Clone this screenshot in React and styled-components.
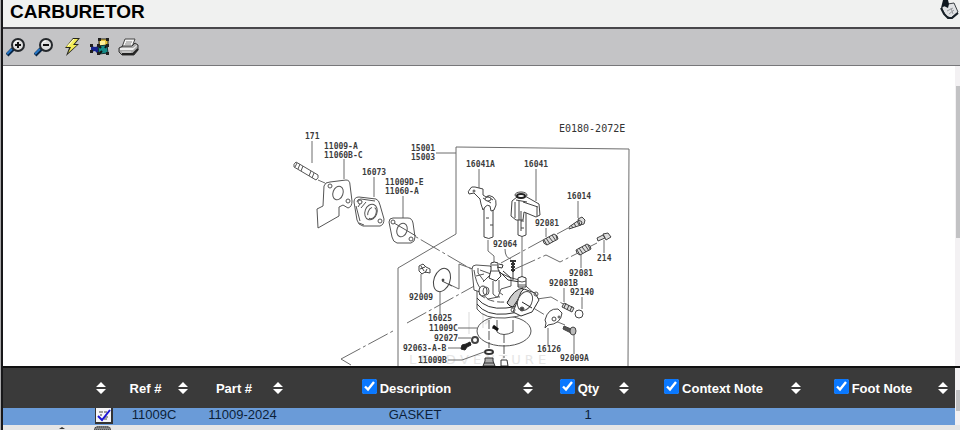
import React, { useState } from 'react';
import styled, { createGlobalStyle } from 'styled-components';

const tools = [
  { name: 'Zoom in', icon: <ZoomIcon plus /> },
  { name: 'Zoom out', icon: <ZoomIcon /> },
  { name: 'Hotspots', icon: <FlashIcon /> },
  { name: 'Fit assembly', icon: <PartsIcon /> },
  { name: 'Print', icon: <PrinterIcon /> },
];

const columns = [
  { id: 'ref', label: 'Ref #', width: 82 },
  { id: 'part', label: 'Part #', width: 95 },
  { id: 'description', label: 'Description', width: 250, toggle: true },
  { id: 'qty', label: 'Qty', width: 96, toggle: true },
  { id: 'context', label: 'Context Note', width: 172, toggle: true },
  { id: 'foot', label: 'Foot Note', width: 147, toggle: true },
];

const rows = [
  { ref: '11009C', part: '11009-2024', description: 'GASKET', qty: '1', context: '', foot: '' },
];

// [x, baseline, text]
const labels = [
  [306, 139, '171'],
  [325, 149, '11009-A'],
  [325, 158, '11060B-C'],
  [363, 175, '16073'],
  [386, 185, '11009D-E'],
  [386, 194, '11060-A'],
  [412, 151, '15001'],
  [412, 160, '15003'],
  [467, 167, '16041A'],
  [525, 167, '16041'],
  [568, 199, '16014'],
  [536, 226, '92081'],
  [494, 247, '92064'],
  [598, 261, '214'],
  [570, 276, '92081'],
  [550, 286, '92081B'],
  [571, 295, '92140'],
  [410, 300, '92009'],
  [429, 321, '16025'],
  [430, 331, '11009C'],
  [435, 341, '92027'],
  [404, 351, '92063-A-B'],
  [419, 363, '11009B'],
  [538, 352, '16126'],
  [561, 361, '92009A'],
];

function App() {
  const [shown, setShown] = useState({ description: true, qty: true, context: true, foot: true });

  const toggle = (id) => setShown({ ...shown, [id]: !shown[id] });

  return (
    <>
      <GlobalStyle />
      <Page>
        <Header>
          <h1>CARBURETOR</h1>
          <HandButton aria-label="Add to list"><HandIcon /></HandButton>
        </Header>
        <Toolbar>
          {tools.map((tool) => (
            <ToolButton key={tool.name} aria-label={tool.name}>{tool.icon}</ToolButton>
          ))}
        </Toolbar>
        <DiagramPane>
          <Canvas><Diagram /></Canvas>
          <Track><Thumb $top={20} $height={152} /></Track>
        </DiagramPane>
        <PartsPane>
          <PartsTable>
            <colgroup>
              <col width={110} />
              {columns.map((col) => <col key={col.id} width={col.width} />)}
            </colgroup>
            <thead>
              <tr>
                <th>
                  <HeadCell><SortButton aria-label="Sort by selection"><SortIcon /></SortButton></HeadCell>
                </th>
                {columns.map((col) => (
                  <th key={col.id}>
                    <HeadCell>
                      <HeadLabel>
                        {col.toggle && (
                          <input type="checkbox" checked={shown[col.id]} onChange={() => toggle(col.id)} />
                        )}
                        <span>{col.label}</span>
                      </HeadLabel>
                      <SortButton aria-label={`Sort by ${col.label}`}><SortIcon /></SortButton>
                    </HeadCell>
                  </th>
                ))}
              </tr>
            </thead>
            <tbody>
              {rows.map((row) => (
                <PartRow key={row.ref}>
                  <td><IconCell><NoteIcon /></IconCell></td>
                  {columns.map((col) => <td key={col.id}>{row[col.id]}</td>)}
                </PartRow>
              ))}
            </tbody>
          </PartsTable>
          <Track><Thumb $top={22} $height={21} /></Track>
        </PartsPane>
        <NextRow><NextRowIcon /></NextRow>
      </Page>
    </>
  )
}

function ZoomIcon({ plus }) {
  return (
    <svg width="20" height="20" viewBox="0 0 20 20">
      <path d="M1 18L7 12" stroke="#082444" strokeWidth="4" />
      <path d="M1 17L6 12" stroke="#2475c4" strokeWidth="2" />
      <circle cx="12" cy="8" r="6" fill="#dedede" stroke="#25282c" strokeWidth="2" />
      <path d="M8 7a4 4 0 0 1 4-3" stroke="#fff" fill="none" />
      <path d={plus ? 'M9 8h6M12 5v6' : 'M9 8h6'} stroke="#111" strokeWidth="2" />
    </svg>
  )
}

function FlashIcon() {
  return (
    <svg width="20" height="20" viewBox="0 0 20 20">
      <path d="M11 1h7l-5 6h4L4 19l3-8H3z" fill="#25251c" />
      <path d="M11 2h5l-5 6h4L6 16l3-6H4z" fill="#f4ed58" />
      <path d="M12 2L6 9" stroke="#fffde0" />
    </svg>
  )
}

function PartsIcon() {
  return (
    <svg width="20" height="20" viewBox="0 0 20 20">
      <path d="M9 2h9v8H9z" fill="#e6c33f" stroke="#26261c" strokeWidth="1" />
      <path d="M10 4h5v4h-5z" fill="#fff29a" />
      <path d="M1 9l4 1 4-1 2 4-3 4-3-3-4 1z" fill="#16228e" />
      <path d="M8 9l9-1 1 8-9 1z" fill="#168b88" stroke="#173536" />
      <path d="M8 8l3 3M17 8l-2 3M9 17l3-3" stroke="#111" strokeWidth="2" />
      <path d="M8 1h3v3H8zM16 1h3v3h-3zM0 7h3v3H0zM16 7h3v3h-3zM0 13h3v3H0zM7 15h3v3H7zM16 15h3v3h-3zM7 7h3v3H7z" fill="#202020" />
    </svg>
  )
}

function PrinterIcon() {
  return (
    <svg width="21" height="20" viewBox="0 0 21 20">
      <path d="M7 2h10l-3 8H4z" fill="#f6f6f6" stroke="#444" />
      <path d="M8 5h6M7 7h6" stroke="#888" />
      <path d="M1 11l4-2h9l3-3 3 2v5l-4 5H4l-3-3z" fill="#aaa" stroke="#333" />
      <path d="M2 11h13l4-3v1l-4 4H2z" fill="#eee" />
      <path d="M4 17h11l5-5" stroke="#222" strokeWidth="2" fill="none" />
      <path d="M4 15h9" stroke="#ddd" />
    </svg>
  )
}

function HandIcon() {
  return (
    <svg width="20" height="19" viewBox="0 0 20 19">
      <path d="M2 7l6-3 6-1 4 9-7 6-5-2-4-7z" fill="#e0e2e4" stroke="#3a3f44" strokeWidth="1" />
      <path d="M3 0h5l1 4-1 4-2-1-2-1-3 2 1-4z" fill="#101820" />
      <path d="M1 8l3 6 4 4h4l6-5" fill="none" stroke="#172027" strokeWidth="2" />
      <path d="M7 11l6-3M9 14l5-4M11 8l2 6" stroke="#9a9ca0" />
    </svg>
  )
}

function SortIcon() {
  return (
    <svg width="10" height="12" viewBox="0 0 10 12">
      <path d="M5 0l5 5H0zM5 12l5-5H0z" fill="#fff" />
    </svg>
  )
}

function NoteIcon() {
  return (
    <svg width="18" height="16" viewBox="0 0 18 16">
      <path d="M0 0h18v16H0z" fill="#333" />
      <path d="M1 0h15v14H1z" fill="#f5f5f7" />
      <path d="M4 4h4M9 4h3M5 7h2M10 9h3M9 11h3" stroke="#444" strokeWidth="1" />
      <path d="M3 8l4 4 8-10" stroke="#1b14d6" strokeWidth="2" fill="none" />
    </svg>
  )
}

function NextRowIcon() {
  return (
    <svg width="54" height="5" viewBox="0 0 54 5">
      <path d="M1 4l3-2 3 2z" fill="#333" />
      <path d="M36 5V3l3-2h11l3 2v2z" fill="#888" />
      <path d="M37 3l2-1h11l2 1M36 5h17" stroke="#222" strokeDasharray="1 1" fill="none" />
    </svg>
  )
}

function Diagram() {
  return (
    <svg width="380" height="300" viewBox="290 66 380 300" role="img" aria-label="Carburetor exploded view">
      <Watermark x="410" y="364">L E A D V E N T U R E</Watermark>
      <g fill="none" stroke="#ececec" strokeWidth="2">
        <path d="M470 312v22M484 304v24M500 310l-14 14" />
      </g>

      {/* assembly frame and leaders */}
      <g fill="none" stroke="#6c6c6c" strokeWidth="1">
        <path d="M437 153h20M457 234V147l173 2-1 217M457 234l-58 34v98" />
        <path d="M313 141v22M345 159v20M375 177v20M404 196v22M480 169v20M537 169v32M579 201v17M547 228v9M605 240v13M582 253v15M565 288v14M583 297v12" />
        <path d="M422 274v19M441 292v22M549 328v17M575 335v19M506 249q0 9 6 10" />
        <path d="M459 328h19M459 338h13M449 348h13M449 360h14l22-8" />
        <path d="M319 180l7 3M443 281l17 8v-25l14 5M352 365l-10-6" />
        <path d="M489 240v11l6 5v7M523 237v42" />
      </g>
      <g fill="none" stroke="#6c6c6c" strokeWidth="1" strokeDasharray="22 3 3 3">
        <path d="M395 224l77 45M342 359l52-28M408 323l80-44" />
        <path d="M502 263l42-23M558 234l11-6M516 269l31-14 14 7 18-9M590 247l8-4M538 299l14-2 14 8M526 303l20 12M554 320l12 5" />
      </g>

      {/* stud 171 */}
      <g fill="#fff" stroke="#555" strokeWidth="1">
        <path d="M297 162l22 13q1 3-2 5l-22-13q-1-3 2-5z" />
        <path d="M298 163l-2 4M301 164l-2 5M304 166l-2 5M312 171l-2 5M315 173l-2 5" />
      </g>

      {/* gaskets and insulator */}
      <g fill="#fff" stroke="#555" strokeWidth="1">
        <path d="M325 186q1-4 6-4l16-2q4 0 4 5l2 16q0 6-4 7l-5-3-4 2v9l-21 12-1-19 6-3z" />
        <ellipse cx="339" cy="193" rx="5" ry="7" transform="rotate(20 339 193)" />
        <circle cx="331" cy="186" r="2" />
        <circle cx="349" cy="201" r="2" />
        <path d="M355 202q0-5 5-5l17 2q3 1 4 6l4 14q0 6-4 7l-17 0q-5-1-6-6z" />
        <path d="M358 202q0-3 4-3l14 2M359 207l4-6M362 208l5-6M357 206l4 15M360 223l5 2" />
        <ellipse cx="372" cy="212" rx="6" ry="8" transform="rotate(20 372 212)" />
        <ellipse cx="373" cy="213" rx="4" ry="6" transform="rotate(20 373 213)" strokeDasharray="9 3" />
        <circle cx="381" cy="221" r="2" />
        <circle cx="361" cy="202" r="2" />
        <path d="M390 222q0-4 4-4l15 0q4 0 5 5l2 14q0 5-4 6l-14 0q-4-1-5-6z" />
        <ellipse cx="403" cy="230" rx="5" ry="7" transform="rotate(20 403 230)" />
        <circle cx="394" cy="222" r="2" />
        <circle cx="412" cy="239" r="2" />
        <path d="M395 223l22 13" />
      </g>

      {/* choke and throttle shafts */}
      <g fill="#fff" stroke="#444" strokeWidth="1">
        <path d="M485 203h9v34q-4 3-9 0z" />
        <path d="M471 189q1-3 5-2l8 2 0 6 3 2q3-3 7 0 4 3 3 8l-2 5-3 1-1-5q-3-2-5 1l-2 3-2-6-1-5-6-6-5 1q-2-2 1-5z" />
        <circle cx="475" cy="191" r="1" />
        <path d="M484 198l8 5M488 196l6 4M487 218h3M491 225h3" />
        <ellipse cx="489" cy="199" rx="3" ry="2" />
        <path d="M519 207h8v28q-4 3-8 0z" />
        <path d="M513 201l5-4 8-1 14 8 1 11-4 2-12-5-1 8-7 0-5-4z" />
        <path d="M524 202l15 5M538 207v9M516 202v16M520 201v19M517 200l11 2M522 211v20M522 221h3M522 228h3" />
        <ellipse cx="522" cy="195" rx="6" ry="3" />
        <ellipse cx="522" cy="196" rx="4" ry="2" stroke="#222" strokeWidth="2" />
      </g>

      {/* adjusting screws and springs */}
      <g fill="#ddd" stroke="#444" strokeWidth="1">
        <path d="M570 227l10-7 3 2-1 3-12 4zM579 219l4-2 3 3-1 4-4 1z" />
        <path d="M572 225l2 3M575 223l2 4M578 221l2 4" />
        <path d="M598 238l6-3 2 3-7 3zM604 234l5-1 3 4-5 3z" />
        <path d="M544 240l11-6q4 1 4 5l-11 6q-4-1-4-5z" />
        <path d="M547 238l4 6M550 237l4 5M553 235l4 6M545 240l3 5M557 235l1 4" />
        <path d="M577 250l11-6q4 1 4 5l-11 6q-4-1-4-5z" />
        <path d="M580 248l4 6M583 247l4 5M586 245l4 6M578 250l3 5M589 245l2 4" />
        <path d="M565 303l10 5-2 4-10-5z" />
        <path d="M567 303l-2 5M570 305l-2 5M573 306l-2 5" />
      </g>

      {/* small hardware */}
      <g fill="#fff" stroke="#444" strokeWidth="1">
        <circle cx="580" cy="314" r="4" />
        <path d="M420 266l4-2 3 3 4 2v4l-5-1-3 2-3-3z" />
        <path d="M422 266l3 5M428 269l-2 4M421 269l5-2" />
        <ellipse cx="443" cy="280" rx="8" ry="12" transform="rotate(20 443 280)" />
        <circle cx="444" cy="280" r="1" fill="#222" />
        <path d="M443 281l10 5" />
        <path d="M547 323l-1 5 3-3q13-1 14-12l-4-4q-10-1-13 11z" />
        <circle cx="555" cy="319" r="2" />
        <circle cx="560" cy="317" r="1" />
        <path d="M565 326l7 3v4l-8-4z" fill="#555" />
        <ellipse cx="574" cy="331" rx="3" ry="4" fill="#bbb" />
        <ellipse cx="476" cy="340" rx="3" ry="3" strokeWidth="2" />
        <path d="M463 345l4-1 4-2 1 3-4 2-2 3-4-1z" fill="#222" stroke="#222" />
      </g>

      {/* float bowl gasket and carburetor body */}
      <g fill="none" stroke="#555" strokeWidth="1">
        <ellipse cx="505" cy="331" rx="27" ry="15" />
        <path d="M498 320v12q6 5 16 0v-12" fill="#fff" />
        <path d="M490 320v28M505 334v24M493 328l6 2" strokeDasharray="9 2" />
        <path d="M494 326l5 4" stroke="#111" strokeWidth="3" />
        <path d="M478 292l0 17q7 10 28 9 26-2 31-13v-10l-17-15-28-8-16 8z" fill="#fff" />
        <path d="M478 298q9 12 29 10t30-10M478 304q9 12 29 10t30-11" stroke="#333" />
        <path d="M480 294q11 9 26 8l10-2" strokeDasharray="7 3" />
        <path d="M473 269q0-4 4-4l14 1 4 4 17 8 0 8-10 3-3 8-10 2-8-7-6-2z" fill="#fff" />
        <path d="M475 270q2 14 7 19M479 268v5l6 8M477 276l8-2M481 270l11 4-8 8" />
        <path d="M492 263q3-2 7 0v6l3 7-5 5-7-3 2-8z" fill="#fff" stroke="#333" />
        <path d="M493 265h6M492 271h9M494 281v13q3 4 7 3M500 280v12l4 3" />
        <ellipse cx="484" cy="291" rx="4" ry="5" fill="#fff" stroke="#333" />
        <ellipse cx="487" cy="291" rx="3" ry="4" />
        <path d="M500 264l4 1-1 3-5-1M501 272l8 8 12 2M504 271l8 7" stroke="#333" />
        <path d="M519 278q4-3 8 0v9h-8z" fill="#fff" stroke="#333" />
        <path d="M519 281q4 2 8 0M519 285h8" />
        <path d="M524 288q-9 1-16 15 3 4 6 4l10-15z" fill="#ccc" stroke="#222" />
        <path d="M525 289l11 4 4 7-7 12-11 4-8-4 8-20z" fill="#fff" stroke="#333" />
        <ellipse cx="526" cy="301" rx="7" ry="10" transform="rotate(25 526 301)" />
        <circle cx="514" cy="310" r="2" />
        <circle cx="537" cy="294" r="2" />
        <circle cx="523" cy="309" r="2" fill="#444" />
        <path d="M523 302l10 6" stroke="#222" />
        <path d="M511 261h6M512 264h4M512 267h4M512 270h4M514 262v10" stroke="#333" strokeWidth="2" />
        <path d="M514 272v8" stroke="#333" />
      </g>
      <g fill="#aaa" stroke="#333" strokeWidth="1">
        <ellipse cx="490" cy="352" rx="4" ry="2" fill="#fff" strokeWidth="2" />
        <path d="M486 358h8v3l2 5h-12l2-5zM485 363h10" />
        <path d="M502 360h6l1 6h-7z" fill="#fff" />
      </g>

      {labels.map(([x, y, text]) => (
        <PartLabel key={`${text}-${x}`} x={x} y={y}>{text}</PartLabel>
      ))}
      <SheetCode x="560" y="132">E0180-2072E</SheetCode>
    </svg>
  )
}

const GlobalStyle = createGlobalStyle`
  * {
    box-sizing: border-box;
  }

  body {
    margin: 0;
    background-color: #a9a9ab;
    font-family: "Liberation Sans", Arial, sans-serif;
    overflow: hidden;
  }

  svg {
    display: block;
  }

  button {
    display: flex;
    padding: 0;
    background-color: transparent;
    border: none;
    cursor: pointer;
  }
`;

const Page = styled.div`
  display: flex;
  flex-direction: column;
  margin-left: 1px;
  border-left: 2px solid #18181a;
`;

const Header = styled.header`
  display: flex;
  justify-content: space-between;
  height: 29px;
  padding-left: 7px;
  background-color: #f0f1f0;
  border-bottom: 2px solid #48474b;

  h1 {
    margin: 0;
    font-size: 19px;
    line-height: 24px;
    font-weight: 700;
    color: #000;
  }
`;

const HandButton = styled.button`
  align-self: flex-start;
`;

const Toolbar = styled.div`
  display: flex;
  align-items: center;
  gap: 8px;
  height: 37px;
  padding-left: 3px;
  background-color: #c4c4c6;
  border-bottom: 1px solid #77777a;
`;

const ToolButton = styled.button`
  min-width: 20px;
`;

const DiagramPane = styled.section`
  display: flex;
  background-color: #fff;
`;

const Canvas = styled.div`
  flex: 1;
  display: flex;
  justify-content: center;
`;

const Track = styled.div`
  width: 5px;
  padding-left: 1px;
  background-color: #f3f1f3;
`;

const Thumb = styled.div`
  height: ${(props) => props.$height}px;
  margin-top: ${(props) => props.$top}px;
  background-color: #c2c2c4;
`;

const PartLabel = styled.text`
  font-family: "DejaVu Sans Mono", monospace;
  font-size: 8px;
  font-weight: 700;
  fill: #3c3c3c;
`;

const SheetCode = styled.text`
  font-family: "DejaVu Sans Mono", monospace;
  font-size: 10px;
  fill: #333;
`;

const Watermark = styled.text`
  font-family: "DejaVu Sans", sans-serif;
  font-size: 13px;
  fill: #e6e6e6;
`;

const PartsPane = styled.section`
  display: flex;
  border-top: 2px solid #111;
`;

const PartsTable = styled.table`
  flex: 1;
  table-layout: fixed;
  border-collapse: collapse;
  font-size: 13px;

  th {
    height: 40px;
    padding: 0 7px 0 0;
    color: #fff;
    background-color: #3a3a3a;
  }

  td {
    height: 17px;
    padding: 0;
    line-height: 13px;
    text-align: center;
    vertical-align: top;
  }
`;

const HeadCell = styled.div`
  display: flex;
  align-items: center;
  justify-content: flex-end;
`;

const HeadLabel = styled.label`
  flex: 1;
  display: flex;
  align-items: center;
  justify-content: center;
  white-space: nowrap;

  input {
    width: 15px;
    height: 15px;
    margin: 0 3px 4px 0;
    accent-color: #0a78ff;
  }
`;

const SortButton = styled.button`
  flex: none;
`;

const PartRow = styled.tr`
  color: #0c1f38;
  background-color: #6a9bd8;
`;

const IconCell = styled.div`
  display: flex;
  justify-content: flex-end;
`;

const NextRow = styled.div`
  height: 5px;
  padding-left: 55px;
  background-color: #e6e6e6;
`;

export default App
